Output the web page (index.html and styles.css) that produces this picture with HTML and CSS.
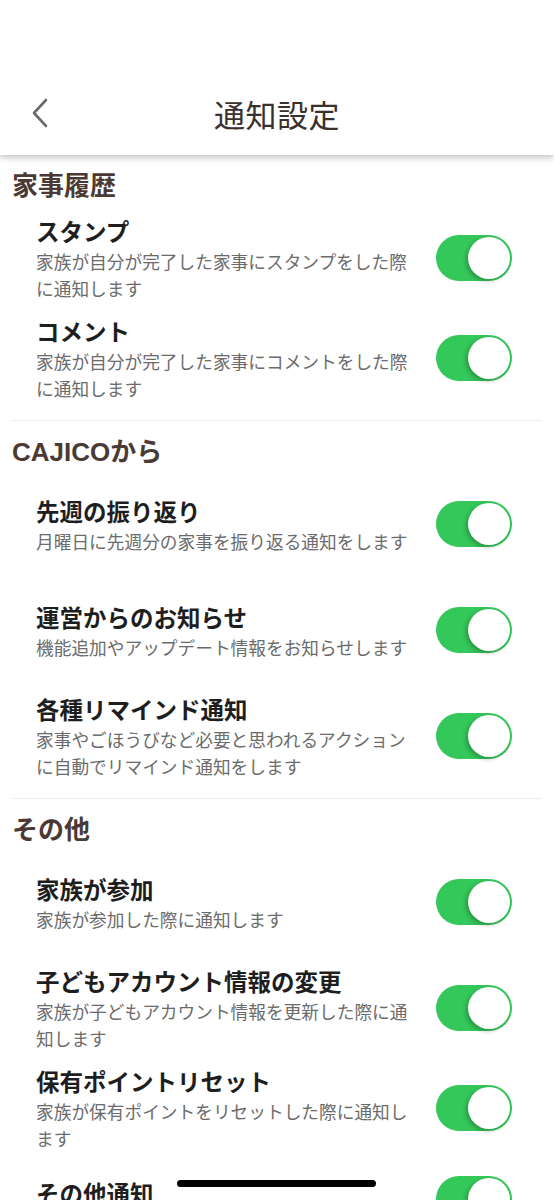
FILE: index.html
```html
<!DOCTYPE html>
<html lang="ja">
<head>
    <meta charset="UTF-8">
    <meta name="viewport" content="width=device-width, initial-scale=1.0">
    <title>通知設定</title>
    <link rel="stylesheet" href="styles.css">
</head>
<body>

    <!-- Header -->
    <header class="topbar">
        <div class="topbar-inner">
            <a class="back" href="#" aria-label="戻る">
                <svg width="18" height="30" viewBox="0 0 18 30">
                    <path d="M15 2 L3 15 L15 28" fill="none" stroke="#6b6b6b" stroke-width="2.6" stroke-linecap="round" stroke-linejoin="round"/>
                </svg>
            </a>
            <h1>通知設定</h1>
            <span></span>
        </div>
    </header>

    <!-- 家事履歴 -->
    <section class="group">
        <h2 class="group-title">家事履歴</h2>
        <div class="setting">
            <div class="setting-text">
                <p class="setting-name">スタンプ</p>
                <p class="setting-desc">家族が自分が完了した家事にスタンプをした際に通知します</p>
            </div>
            <span class="switch"><span class="knob"></span></span>
        </div>
        <div class="setting">
            <div class="setting-text">
                <p class="setting-name">コメント</p>
                <p class="setting-desc">家族が自分が完了した家事にコメントをした際に通知します</p>
            </div>
            <span class="switch"><span class="knob"></span></span>
        </div>
    </section>
    <hr class="divider">

    <!-- CAJICOから -->
    <section class="group">
        <h2 class="group-title">CAJICOから</h2>
        <div class="setting setting--single">
            <div class="setting-text">
                <p class="setting-name">先週の振り返り</p>
                <p class="setting-desc">月曜日に先週分の家事を振り返る通知をします</p>
            </div>
            <span class="switch"><span class="knob"></span></span>
        </div>
        <div class="setting setting--single">
            <div class="setting-text">
                <p class="setting-name">運営からのお知らせ</p>
                <p class="setting-desc">機能追加やアップデート情報をお知らせします</p>
            </div>
            <span class="switch"><span class="knob"></span></span>
        </div>
        <div class="setting">
            <div class="setting-text">
                <p class="setting-name">各種リマインド通知</p>
                <p class="setting-desc">家事やごほうびなど必要と思われるアクションに自動でリマインド通知をします</p>
            </div>
            <span class="switch"><span class="knob"></span></span>
        </div>
    </section>
    <hr class="divider">

    <!-- その他 -->
    <section class="group">
        <h2 class="group-title">その他</h2>
        <div class="setting setting--single">
            <div class="setting-text">
                <p class="setting-name">家族が参加</p>
                <p class="setting-desc">家族が参加した際に通知します</p>
            </div>
            <span class="switch"><span class="knob"></span></span>
        </div>
        <div class="setting">
            <div class="setting-text">
                <p class="setting-name">子どもアカウント情報の変更</p>
                <p class="setting-desc">家族が子どもアカウント情報を更新した際に通知します</p>
            </div>
            <span class="switch"><span class="knob"></span></span>
        </div>
        <div class="setting">
            <div class="setting-text">
                <p class="setting-name">保有ポイントリセット</p>
                <p class="setting-desc">家族が保有ポイントをリセットした際に通知します</p>
            </div>
            <span class="switch"><span class="knob"></span></span>
        </div>
        <div class="setting setting--last">
            <div class="setting-text">
                <p class="setting-name">その他通知</p>
                <p class="setting-desc">その他のお知らせを通知します</p>
            </div>
            <span class="switch"><span class="knob"></span></span>
        </div>
    </section>

    <div class="home-indicator"></div>
</body>
</html>
```

FILE: styles.css
```css
body {
    font-family: "Noto Sans CJK JP", "Noto Sans", sans-serif;
    margin: 0;
    background-color: #fff;
    color: #1e1e1e;
}
p {
    margin: 0;
}
.topbar {
    height: 155px;
    box-sizing: border-box;
    padding-top: 87px;
    background: #fff;
    box-shadow: 0 3px 6px rgba(0, 0, 0, 0.22);
    position: relative;
    z-index: 1;
}
.topbar-inner {
    height: 52px;
    display: grid;
    grid-template-columns: 1fr auto 1fr;
    align-items: center;
}
.back {
    display: flex;
    align-items: center;
    padding-left: 31px;
}
.topbar h1 {
    margin: 0;
    font-size: 31px;
    font-weight: 400;
    color: #3a302d;
    letter-spacing: 0.5px;
}
.group {
    padding: 15px 0 12px;
}
.group-title {
    margin: 0 0 6px;
    padding: 0 12px;
    font-family: "Liberation Sans", "Noto Sans CJK JP", sans-serif;
    font-size: 26px;
    line-height: 32px;
    font-weight: 700;
    color: #4b3a33;
}
.divider {
    margin: 0 12px;
    border: none;
    border-top: 1px solid #ececec;
}
.setting {
    display: flex;
    align-items: center;
    min-height: 100px;
    box-sizing: border-box;
    padding: 6px 42px 6px 36px;
}
.setting--single {
    min-height: 106px;
    padding-top: 3px;
    padding-bottom: 9px;
}
.setting--last {
    align-items: flex-start;
    padding-top: 18px;
}
.setting-text {
    flex: 1;
    padding-right: 24px;
}
.setting-name {
    font-size: 23.5px;
    line-height: 34px;
    font-weight: 700;
    color: #1e1e1e;
}
.setting-desc {
    font-size: 17.7px;
    line-height: 27px;
    color: #6b6b6b;
}
.switch {
    flex-shrink: 0;
    width: 76px;
    height: 46px;
    box-sizing: border-box;
    padding: 2px;
    border-radius: 23px;
    background-color: #34c759;
    display: flex;
    justify-content: flex-end;
}
.knob {
    width: 42px;
    height: 42px;
    border-radius: 50%;
    background: #fff;
    box-shadow: -2px 2px 4px rgba(0, 0, 0, 0.25);
}
.home-indicator {
    position: fixed;
    left: 50%;
    bottom: 13px;
    width: 199px;
    height: 7px;
    margin-left: -100px;
    border-radius: 4px;
    background: #000;
}
```
